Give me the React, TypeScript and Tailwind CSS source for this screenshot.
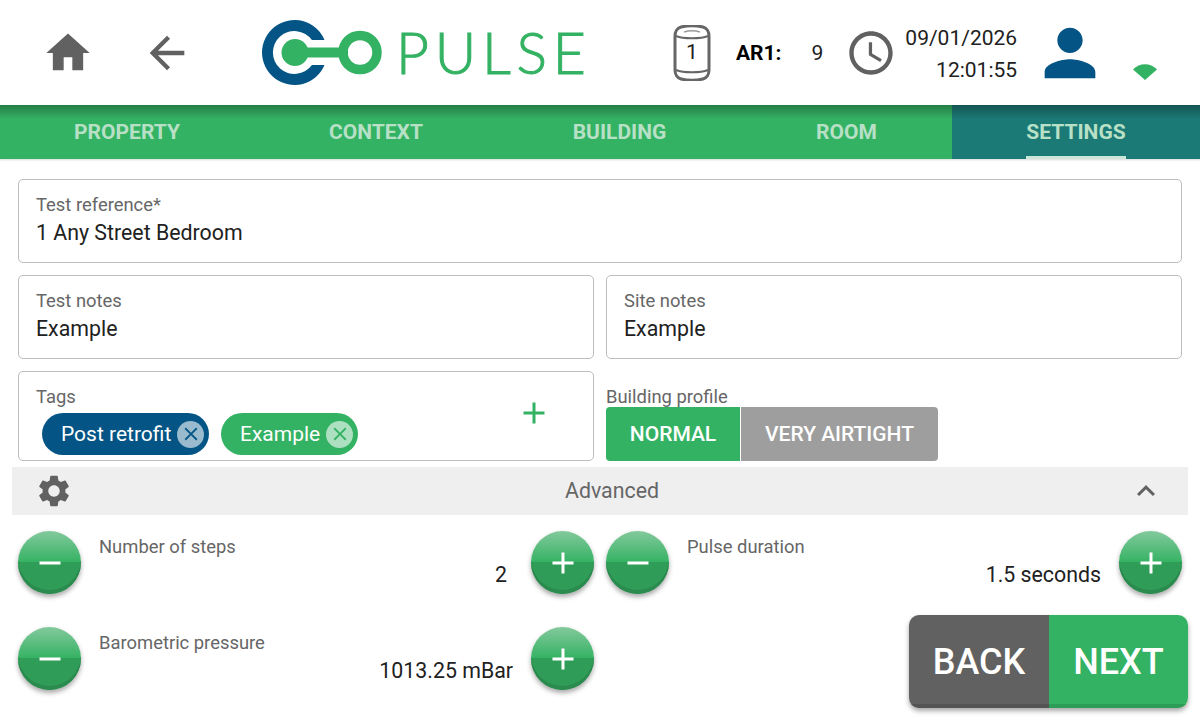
import { MdAccessTime, MdAdd, MdArrowBack, MdClose, MdExpandLess, MdHome, MdPerson, MdRemove, MdSettings } from "react-icons/md";

const TABS = [
  { label: "PROPERTY", width: "w-[254px]" },
  { label: "CONTEXT", width: "w-[244px]" },
  { label: "BUILDING", width: "w-[243px]" },
  { label: "ROOM", width: "w-[211px]" },
];

function Logo() {
  return (
    <svg width="125" height="75" viewBox="258 15 125 75" className="shrink-0">
      <path
        d="M324.5 40A32.5 32.5 0 1 0 324.5 65L311.9 65A21.5 21.5 0 1 1 311.9 40Z"
        fill="#045585"
      />
      <circle cx="295" cy="52.5" r="13.5" fill="#34b263" />
      <rect x="300" y="47.5" width="48" height="10" fill="#34b263" />
      <circle cx="360" cy="52.5" r="17" fill="none" stroke="#34b263" strokeWidth="9.5" />
    </svg>
  );
}

function CanIcon() {
  return (
    <div className="relative h-[56px] w-[38px] shrink-0">
      <svg width="38" height="56" viewBox="0 0 38 56" fill="none" stroke="#666666" strokeWidth="3">
        <path d="M8 2C14 .5 24 .5 30 2C34 3 36 7 36 11V45C36 49 34 53 30 54C24 55.5 14 55.5 8 54C4 53 2 49 2 45V11C2 7 4 3 8 2Z" />
        <path d="M3 11C10 14 28 14 35 11M3 45C10 48 28 48 35 45" strokeWidth="2" />
        <path d="M11 7C16 5.5 22 5.5 27 7" strokeWidth="1.5" stroke="#9a9a9a" />
      </svg>
      <span className="absolute inset-0 flex items-center justify-center text-[21px] text-[#212121]">1</span>
    </div>
  );
}

function Field({ label, value, className }: { label: string; value: string; className?: string }) {
  return (
    <div className={`h-[84px] rounded-[5px] border border-[#bdbdbd] px-[17px] pt-[13px] ${className ?? ""}`}>
      <div className="text-[18.4px] leading-[24px] text-[#666666]">{label}</div>
      <div className="mt-[2px] text-[21.33px] leading-[28px] text-[#212121]">{value}</div>
    </div>
  );
}

function Chip({ label, bg, text, width }: { label: string; bg: string; text: string; width: string }) {
  return (
    <div className={`flex h-[42px] items-center justify-between rounded-full pl-[19px] pr-[5px] text-[21px] text-white ${bg} ${width}`}>
      <span className="pt-[1px]">{label}</span>
      <span className={`flex h-[27px] w-[27px] items-center justify-center rounded-full bg-white/60 ${text}`}>
        <MdClose size={22} />
      </span>
    </div>
  );
}

function RoundButton({ plus }: { plus?: boolean }) {
  return (
    <button
      type="button"
      className="flex h-[63px] w-[63px] shrink-0 items-center justify-center rounded-full bg-[linear-gradient(180deg,#83c99c_0%,#34b263_50%,#2f9c57_50%,#2f9c57_100%)] text-white shadow-[inset_0_-4px_0_#2b8a4e,0_3px_5px_rgba(0,0,0,0.35)]"
    >
      {plus ? <MdAdd size={36} /> : <MdRemove size={36} />}
    </button>
  );
}

function Stepper({ label, value, valueRight, width }: { label: string; value: string; valueRight: string; width: string }) {
  return (
    <div className={`flex items-start ${width}`}>
      <RoundButton />
      <div className="relative h-[63px] min-w-0 flex-1 pl-[18px]">
        <div className="pt-[4px] text-[18.4px] leading-[24px] text-[#666666]">{label}</div>
        <div className={`mt-[2px] text-right text-[21.33px] leading-[28px] text-[#212121] ${valueRight}`}>{value}</div>
      </div>
      <RoundButton plus />
    </div>
  );
}

export default function App() {
  return (
    <div className="relative h-[720px] w-[1200px] overflow-hidden bg-white font-[Roboto,sans-serif]">
      {/* Header */}
      <header className="flex h-[105px] items-center">
        <MdHome size={52} color="#616161" className="ml-[42px] shrink-0" />
        <MdArrowBack size={52} color="#616161" className="ml-[47px] shrink-0" />
        <div className="ml-[65px]">
          <Logo />
        </div>
        <span className="ml-[13px] w-[184px] shrink-0 font-[Lato,sans-serif] text-[57px] font-light leading-none tracking-[5.75px] text-[#34b263] [-webkit-text-stroke:1px_#34b263]">PULSE</span>
        <div className="ml-[93px]">
          <CanIcon />
        </div>
        <span className="ml-[25px] pt-[2px] text-[21px] font-bold text-black">AR1:</span>
        <span className="ml-[30px] pt-[2px] text-[21px] text-[#212121]">9</span>
        <MdAccessTime size={52} color="#616161" className="ml-[22px] shrink-0" />
        <div className="ml-[8px] pt-[2px] text-right text-[21px] leading-[32px] text-[#212121]">
          <div>09/01/2026</div>
          <div>12:01:55</div>
        </div>
        <MdPerson size={76} color="#045585" className="ml-[15px] shrink-0" />
        <svg width="24" height="16" viewBox="0 0 24 16" className="ml-[25px] mt-[38px] shrink-0">
          <path d="M0 5.5C6.5-1.5 17.5-1.5 24 5.5L12 16z" fill="#34b263" />
        </svg>
      </header>

      {/* Tabs */}
      <nav className="relative flex h-[54px] text-[21px] font-bold text-[#b7e0c6] shadow-[0_1px_2px_rgba(0,0,0,0.15)]">
        {TABS.map((tab) => (
          <div key={tab.label} className={`flex items-center justify-center bg-[#34b263] pt-[2px] ${tab.width}`}>
            {tab.label}
          </div>
        ))}
        <div className="flex flex-1 justify-center bg-[#1b7976]">
          <span className="flex items-center border-b-[3px] border-[#cbe6d6] pt-[5px]">SETTINGS</span>
        </div>
        <div className="pointer-events-none absolute inset-x-0 top-0 h-[14px] bg-gradient-to-b from-black/30 to-transparent" />
      </nav>

      {/* Form */}
      <main className="flex flex-col px-[18px] pt-[20px]">
        <Field label="Test reference*" value="1 Any Street Bedroom" />
        <div className="mt-[12px] grid grid-cols-2 gap-[12px]">
          <Field label="Test notes" value="Example" />
          <Field label="Site notes" value="Example" />
        </div>
        <div className="mt-[12px] grid grid-cols-2 gap-[12px]">
          <div className="h-[90px] rounded-[5px] border border-[#bdbdbd] px-[17px] pt-[13px]">
            <div className="text-[18.4px] leading-[24px] text-[#666666]">Tags</div>
            <div className="flex items-center gap-[12px] pl-[6px] pt-[4px]">
              <Chip label="Post retrofit" bg="bg-[#045585]" text="text-[#045585]" width="w-[167px]" />
              <Chip label="Example" bg="bg-[#34b263]" text="text-[#34b263]" width="w-[137px]" />
              <MdAdd size={36} color="#34b263" className="ml-[146px] -mt-[42px] shrink-0" />
            </div>
          </div>
          <div className="flex h-[90px] flex-col">
            <div className="h-[36px] pt-[14px] text-[18.4px] leading-[24px] text-[#666666]">Building profile</div>
            <div className="flex h-[54px] text-[21px] font-medium text-white">
              <div className="flex w-[134px] items-center justify-center rounded-l-[4px] bg-[#34b263] pt-[1px]">NORMAL</div>
              <div className="ml-px flex w-[197px] items-center justify-center rounded-r-[4px] bg-[#9e9e9e] pt-[1px]">VERY AIRTIGHT</div>
            </div>
          </div>
        </div>

        {/* Advanced */}
        <div className="-mx-[6px] mt-[6px] flex h-[48px] items-center justify-between bg-[#efefef] pl-[23px] pr-[24px]">
          <MdSettings size={38} color="#616161" />
          <span className="ml-[23px] text-[21.33px] text-[#666666]">Advanced</span>
          <MdExpandLess size={36} color="#616161" />
        </div>

        <div className="mt-[16px] flex gap-[12px]">
          <Stepper label="Number of steps" value="2" valueRight="pr-[24px]" width="w-[576px]" />
          <Stepper label="Pulse duration" value="1.5 seconds" valueRight="pr-[18px]" width="w-[576px]" />
        </div>
        <div className="mt-[33px] flex">
          <Stepper label="Barometric pressure" value="1013.25 mBar" valueRight="pr-[18px]" width="w-[576px]" />
        </div>
      </main>

      {/* Back / Next sit over the page */}
      <div className="absolute left-[909px] top-[615px] flex h-[93px] w-[279px] overflow-hidden rounded-[10px] text-[36px] font-medium text-white shadow-[0_3px_5px_rgba(0,0,0,0.35)]">
        <div className="flex w-[140px] items-center justify-center bg-[#616161] shadow-[inset_0_-4px_0_#545454]">BACK</div>
        <div className="flex flex-1 items-center justify-center bg-[#34b263] shadow-[inset_0_-4px_0_#2d9c57]">NEXT</div>
      </div>
    </div>
  );
}
